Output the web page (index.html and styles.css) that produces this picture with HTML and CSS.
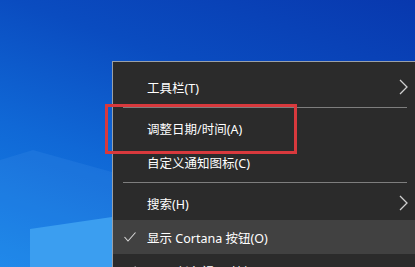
FILE: index.html
```html
<!DOCTYPE html>
<html lang="zh-CN">
<head>
<meta charset="utf-8">
<link rel="stylesheet" href="styles.css">
</head>
<body>
<div class="desktop">
  <div class="beam"></div>
  <div class="panel"></div>
  <div class="menu">
    <div class="item"><span class="check"></span><span class="label">工具栏(T)</span>
      <svg class="chev" width="9" height="16" viewBox="0 0 9 16"><polyline points="1,1 8,8 1,15" fill="none" stroke="#d0d0d0" stroke-width="1.3"/></svg></div>
    <div class="sep"></div>
    <div class="item"><span class="check"></span><span class="label">调整日期/时间(A)</span></div>
    <div class="item"><span class="check"></span><span class="label">自定义通知图标(C)</span></div>
    <div class="sep"></div>
    <div class="item"><span class="check"></span><span class="label">搜索(H)</span>
      <svg class="chev" width="9" height="16" viewBox="0 0 9 16"><polyline points="1,1 8,8 1,15" fill="none" stroke="#d0d0d0" stroke-width="1.3"/></svg></div>
    <div class="item hover"><span class="check"><svg width="12" height="10" viewBox="0 0 12 10"><polyline points="0.5,5 4,9 11.5,0.5" fill="none" stroke="#d8d8d8" stroke-width="1.1"/></svg></span><span class="label">显示 Cortana 按钮(O)</span></div>
    <div class="item"><span class="check"><svg width="12" height="10" viewBox="0 0 12 10"><polyline points="0.5,5 4,9 11.5,0.5" fill="none" stroke="#d8d8d8" stroke-width="1.1"/></svg></span><span class="label">显示“任务视图”按钮(V)</span></div>
  </div>
  <div class="highlight-box"></div>
</div>
</body>
</html>
```
FILE: styles.css
```css
html, body {
  margin: 0;
  padding: 0;
  width: 415px;
  height: 267px;
  overflow: hidden;
}
.desktop {
  position: relative;
  width: 415px;
  height: 267px;
  overflow: hidden;
  padding-top: 61px;
  box-sizing: border-box;
  background: linear-gradient(200deg, #0838ae 0%, #0a4cc0 35%, #1068d6 65%, #1784e8 100%);
  font-family: "Noto Sans", "Noto Sans CJK SC", sans-serif;
}
.beam {
  position: absolute;
  left: 0;
  top: 0;
  width: 415px;
  height: 267px;
  background: rgba(120, 190, 255, 0.10);
  clip-path: polygon(33px 150px, 112px 172px, 112px 267px, 0 267px, 0 160px);
}
.panel {
  position: absolute;
  left: 0;
  top: 0;
  width: 415px;
  height: 267px;
  background: #3b9ef0;
  clip-path: polygon(30px 229px, 112px 217px, 112px 267px, 30px 267px);
}
.menu {
  position: relative;
  margin-left: 112px;
  width: 320px;
  box-sizing: border-box;
  background: #2b2b2b;
  border-top: 1px solid #9aa0a8;
  border-left: 1px solid #9aa0a8;
  padding-top: 8px;
  color: #ffffff;
  font-size: 12.5px;
}
.item {
  height: 34px;
  display: flex;
  align-items: center;
}
.item.hover {
  background: #414141;
}
.check {
  width: 34px;
  padding-left: 11px;
  box-sizing: border-box;
  display: flex;
  align-items: center;
  height: 34px;
}
.label {
  flex: 1;
  white-space: nowrap;
}
.chev {
  margin-right: 24px;
}
.sep {
  height: 1px;
  margin: 3px 25px 3px 10px;
  background: #7e7e7e;
}
.highlight-box {
  position: absolute;
  left: 105px;
  top: 104px;
  width: 192px;
  height: 50px;
  box-sizing: border-box;
  border: 3px solid #d8393d;
}
```
